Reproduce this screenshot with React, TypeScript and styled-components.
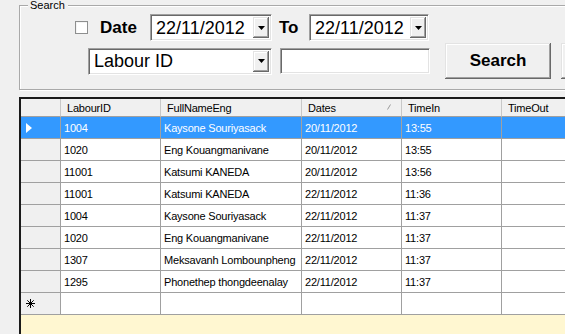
import React from 'react';
import styled, { createGlobalStyle, css } from 'styled-components';

type Row = {
  id: string;
  name: string;
  date: string;
  timeIn: string;
  timeOut: string;
};

const rows: Row[] = [
  { id: '1004', name: 'Kaysone Souriyasack', date: '20/11/2012', timeIn: '13:55', timeOut: '' },
  { id: '1020', name: 'Eng Kouangmanivane', date: '20/11/2012', timeIn: '13:55', timeOut: '' },
  { id: '11001', name: 'Katsumi KANEDA', date: '20/11/2012', timeIn: '13:56', timeOut: '' },
  { id: '11001', name: 'Katsumi KANEDA', date: '22/11/2012', timeIn: '11:36', timeOut: '' },
  { id: '1004', name: 'Kaysone Souriyasack', date: '22/11/2012', timeIn: '11:37', timeOut: '' },
  { id: '1020', name: 'Eng Kouangmanivane', date: '22/11/2012', timeIn: '11:37', timeOut: '' },
  { id: '1307', name: 'Meksavanh Lombounpheng', date: '22/11/2012', timeIn: '11:37', timeOut: '' },
  { id: '1295', name: 'Phonethep thongdeenalay', date: '22/11/2012', timeIn: '11:37', timeOut: '' },
];

const columns = ['LabourID', 'FullNameEng', 'Dates', 'TimeIn', 'TimeOut'];

const DropArrow = () => (
  <DropButton>
    <svg width="7" height="4" viewBox="0 0 7 4">
      <path d="M0 0H7L3.5 4Z" fill="#000" />
    </svg>
  </DropButton>
);

export default function App() {
  return (
    <>
      <GlobalStyle />
      <Page>
        <GroupBox>
          <Legend>Search</Legend>
          <FirstRow>
            <CheckBox />
            <Label $width={50}>Date</Label>
            <Picker $width={122}>
              <PickerText>22/11/2012</PickerText>
              <DropArrow />
            </Picker>
            <Label $width={30} $gap={7}>To</Label>
            <Picker $width={120}>
              <PickerText>22/11/2012</PickerText>
              <DropArrow />
            </Picker>
          </FirstRow>
          <SecondRow>
            <Picker $width={184}>
              <PickerText>Labour ID</PickerText>
              <DropArrow />
            </Picker>
            <TextBox />
            <Button>Search</Button>
            <Button />
          </SecondRow>
        </GroupBox>

        <Grid>
          <GridTable>
            <HeadCell />
            {columns.map((c) => (
              <HeadCell key={c}>
                {c}
                {c === 'Dates' && (
                  <SortMark width="4" height="6" viewBox="0 0 4 6">
                    <path d="M3.5 0.5L0.5 5.5" stroke="#9a9a9a" strokeWidth="1" />
                  </SortMark>
                )}
              </HeadCell>
            ))}

            {rows.map((r, i) => {
              const sel = i === 0;
              return (
                <React.Fragment key={i}>
                  <RowHead $selected={sel}>
                    {sel && (
                      <svg width="6" height="10" viewBox="0 0 6 10">
                        <path d="M0 0L6 5L0 10Z" fill="#fff" />
                      </svg>
                    )}
                  </RowHead>
                  <Cell $selected={sel}>{r.id}</Cell>
                  <Cell $selected={sel}>{r.name}</Cell>
                  <Cell $selected={sel}>{r.date}</Cell>
                  <Cell $selected={sel}>{r.timeIn}</Cell>
                  <Cell $selected={sel}>{r.timeOut}</Cell>
                </React.Fragment>
              );
            })}

            <RowHead>
              <svg width="9" height="9" viewBox="0 0 9 9">
                <path
                  d="M4.5 0V9M0 4.5H9M1.3 1.3L7.7 7.7M7.7 1.3L1.3 7.7"
                  stroke="#000"
                  strokeWidth="1"
                />
              </svg>
            </RowHead>
            <Cell />
            <Cell />
            <Cell />
            <Cell />
            <Cell />
          </GridTable>
          <Filler />
        </Grid>
      </Page>
    </>
  );
}

const GlobalStyle = createGlobalStyle`
  html, body {
    margin: 0;
    padding: 0;
    background: #f0f0f0;
    overflow: hidden;
  }
  body {
    font-family: "Liberation Sans", Arial, sans-serif;
  }
`;

const Page = styled.div`
  width: 565px;
  height: 334px;
  padding: 5px 0 0 19px;
  box-sizing: border-box;
  overflow: hidden;
`;

const GroupBox = styled.div`
  position: relative;
  width: 620px;
  height: 85px;
  box-sizing: border-box;
  border: 1px solid #a9a9a9;
  box-shadow: inset 1px 1px 0 #fff, 1px 1px 0 #fff;
`;

const Legend = styled.span`
  position: absolute;
  top: -7px;
  left: 8px;
  padding: 0 3px 0 2px;
  background: #f0f0f0;
  font-size: 11px;
  line-height: 13px;
  color: #000;
`;

const FirstRow = styled.div`
  display: flex;
  align-items: center;
  height: 27px;
  margin: 8px 0 0 55px;
`;

const SecondRow = styled.div`
  display: flex;
  align-items: center;
  height: 36px;
  margin: 2px 0 0 68px;
`;

const CheckBox = styled.span`
  flex: none;
  width: 13px;
  height: 13px;
  box-sizing: border-box;
  margin-right: 12px;
  background: #fff;
  border: 1px solid #8e8f8f;
  box-shadow: inset 1px 1px 0 #f4f4f4;
`;

const Label = styled.span<{ $width: number; $gap?: number }>`
  flex: none;
  width: ${(p) => p.$width}px;
  margin-left: ${(p) => p.$gap ?? 0}px;
  font-size: 17px;
  font-weight: bold;
  color: #000;
`;

const sunken = css`
  flex: none;
  box-sizing: border-box;
  background: #fff;
  border-top: 1px solid #a0a0a0;
  border-left: 1px solid #a0a0a0;
  border-right: 1px solid #fff;
  border-bottom: 1px solid #fff;
  box-shadow: inset 1px 1px 0 #696969, inset -1px -1px 0 #e3e3e3;
`;

const Picker = styled.div<{ $width: number }>`
  ${sunken};
  display: flex;
  align-items: center;
  width: ${(p) => p.$width}px;
  height: 27px;
  padding: 2px 2px 2px 5px;
`;

const PickerText = styled.span`
  flex: 1;
  font-size: 18px;
  line-height: 20px;
  color: #000;
  white-space: nowrap;
`;

const DropButton = styled.span`
  display: flex;
  flex: none;
  align-items: center;
  justify-content: center;
  width: 16px;
  height: 21px;
  box-sizing: border-box;
  background: #f0f0f0;
  box-shadow: inset -1px -1px 0 #696969, inset 1px 1px 0 #e3e3e3,
    inset -2px -2px 0 #a0a0a0, inset 2px 2px 0 #fff;
`;

const TextBox = styled.div`
  ${sunken};
  width: 150px;
  height: 26px;
  margin-left: 8px;
`;

const Button = styled.div`
  display: flex;
  align-items: center;
  justify-content: center;
  flex: none;
  width: 106px;
  height: 36px;
  margin-left: 15px;
  box-sizing: border-box;
  background: #f0f0f0;
  font-size: 17px;
  font-weight: bold;
  color: #000;
  box-shadow: inset -1px -1px 0 #696969, inset 1px 1px 0 #e3e3e3,
    inset -2px -2px 0 #a0a0a0, inset 2px 2px 0 #fff;

  & + & {
    margin-left: 10px;
  }
`;

const Grid = styled.div`
  display: flex;
  flex-direction: column;
  width: 620px;
  height: 240px;
  margin-top: 7px;
  border-top: 2px solid #1a1a1a;
  border-left: 2px solid #1a1a1a;
`;

const GridTable = styled.div`
  display: grid;
  grid-template-columns: 40px 100px 141px 100px 100px 100px;
  grid-template-rows: 18px;
  grid-auto-rows: 22px;
  font-size: 11px;
  letter-spacing: -0.2px;
  color: #000;
`;

const HeadCell = styled.div`
  position: relative;
  display: flex;
  align-items: center;
  padding-left: 6px;
  box-sizing: border-box;
  background: #f0f0f0;
  border-right: 1px solid #c8c8c8;
  border-bottom: 1px solid #a0a0a0;
  white-space: nowrap;
`;

const SortMark = styled.svg`
  position: absolute;
  right: 10px;
  top: 5px;
`;

const RowHead = styled.div<{ $selected?: boolean }>`
  display: flex;
  align-items: center;
  padding-left: 5px;
  box-sizing: border-box;
  background: ${(p) => (p.$selected ? '#3399ff' : '#f0f0f0')};
  border-right: 1px solid #a0a0a0;
  border-bottom: 1px solid #a0a0a0;
`;

const Cell = styled.div<{ $selected?: boolean }>`
  display: flex;
  align-items: center;
  padding-left: 3px;
  box-sizing: border-box;
  background: ${(p) => (p.$selected ? '#3399ff' : '#fff')};
  color: ${(p) => (p.$selected ? '#fff' : '#000')};
  border-right: 1px solid #a0a0a0;
  border-bottom: 1px solid #a0a0a0;
  white-space: nowrap;
  overflow: hidden;
`;

const Filler = styled.div`
  flex: 1;
  background: #fff7d1;
`;
